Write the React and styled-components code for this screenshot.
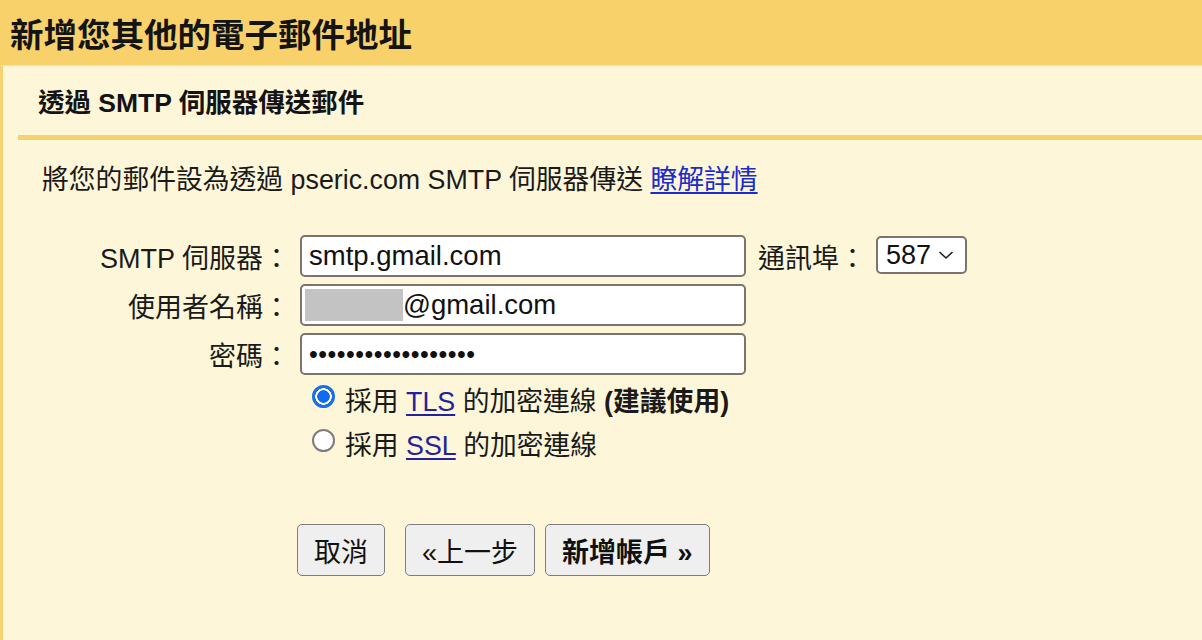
import React from "react";
import styled, { createGlobalStyle } from "styled-components";

const GlobalStyle = createGlobalStyle`
  html, body {
    margin: 0;
    padding: 0;
    background: #fdf6d8;
  }
  body {
    font-family: "Liberation Sans", "Noto Sans CJK TC", sans-serif;
    color: #111;
  }
`;

const Page = styled.div`
  width: 1202px;
  height: 640px;
  display: flex;
  flex-direction: column;
  overflow: hidden;
  background: #fdf6d8;
`;

const Header = styled.div`
  height: 66px;
  flex-shrink: 0;
  display: flex;
  align-items: center;
  padding-left: 10px;
  background: #f9d16b;
  border-bottom: 1px solid #fbe3a0;
  box-sizing: border-box;

  h1 {
    margin: 0;
    font-size: 33.5px;
    font-weight: 700;
    color: #141414;
    letter-spacing: 0;
  }
`;

const Body = styled.div`
  flex: 1;
  border-left: 3px solid #f6d370;
  background: #fdf6d8;
`;

const SubHeader = styled.div`
  margin-left: 15px;
  height: 69px;
  display: flex;
  align-items: center;
  padding-left: 20px;
  border-bottom: 5px solid #f6d16f;

  h2 {
    margin: 0;
    font-size: 26.5px;
    font-weight: 700;
    color: #141414;
  }
`;

const Description = styled.p`
  margin: 20px 0 0 39px;
  font-size: 26.8px;
  line-height: 40px;
  color: #1a1a1a;
`;

const Link = styled.a`
  color: ${props => props.$dark ? "#22229a" : "#1a2ccc"};
  text-decoration: underline;
  text-underline-offset: 3px;
  cursor: pointer;
`;

const Form = styled.div`
  margin: 35px 0 0 39px;
  display: grid;
  grid-template-columns: 248px 446px max-content max-content;
  justify-content: start;
  column-gap: 10px;
  row-gap: 7px;
  align-items: start;
  font-size: 27px;
`;

const Label = styled.label`
  height: 42px;
  display: flex;
  align-items: center;
  justify-content: flex-end;
  color: #1a1a1a;
  white-space: nowrap;
`;

const PortLabel = styled(Label)`
  margin-left: 2px;
  justify-content: flex-start;
`;

const FieldBox = styled.div`
  box-sizing: border-box;
  height: 42px;
  display: flex;
  align-items: center;
  padding: 0 7px;
  background: #fff;
  border: 2px solid #7a756c;
  border-radius: 5px;
  font-size: 27.5px;
  color: #111;
  overflow: hidden;
  white-space: nowrap;
`;

const TextInput = styled.input`
  box-sizing: border-box;
  width: 100%;
  height: 42px;
  padding: 0 7px;
  margin: 0;
  background: #fff;
  border: 2px solid #7a756c;
  border-radius: 5px;
  font-family: "Liberation Sans", "Noto Sans CJK TC", sans-serif;
  font-size: 27.5px;
  color: #111;
  outline: none;
`;

const PasswordInput = styled(TextInput)`
  font-size: 25px;
  letter-spacing: 0.5px;
`;

const Redacted = styled.span`
  display: inline-block;
  width: 98px;
  height: 32px;
  margin-left: -4px;
  background: #c3c3c3;
`;

const SelectBox = styled.div`
  box-sizing: border-box;
  margin-top: 1px;
  width: 91px;
  height: 38px;
  display: flex;
  align-items: center;
  gap: 7px;
  padding: 0 8px;
  background: #fff;
  border: 2px solid #7a756c;
  border-radius: 5px;
  font-size: 27px;
  color: #111;

  svg {
    flex-shrink: 0;
  }
`;

const Span = styled.div`
  grid-column: ${props => props.$col};
`;

const RadioGroup = styled.div`
  grid-column: 2 / 5;
  margin-top: -5px;
  padding-left: 12px;
  display: flex;
  flex-direction: column;
`;

const RadioRow = styled.label`
  height: 44px;
  display: flex;
  align-items: center;
  gap: 10px;
  font-size: 26.8px;
  color: #1a1a1a;
  white-space: nowrap;

  b {
    font-weight: 700;
  }
`;

const Radio = styled.input.attrs({ type: "radio" })`
  appearance: none;
  box-sizing: border-box;
  width: 23px;
  height: 23px;
  margin: -6px 0 0 0;
  border-radius: 50%;
  border: 2px solid #7c7c7c;
  background: #fff;

  &:checked {
    border: 2px solid #1b6fe8;
    background: radial-gradient(circle, #0d6cf2 0 6px, #fff 6.5px 8px, #1b6fe8 8.5px);
  }
`;

const Buttons = styled.div`
  grid-column: 2 / 5;
  margin: 52px 0 0 -3px;
  display: flex;
  gap: 10px;
`;

const Button = styled.button`
  box-sizing: border-box;
  height: 52px;
  padding: 0 16px;
  margin-right: ${props => props.$gap || 0}px;
  background: #efefef;
  border: 1.5px solid #7d7d7d;
  border-radius: 5px;
  font-family: "Liberation Sans", "Noto Sans CJK TC", sans-serif;
  font-size: 27px;
  font-weight: ${props => props.$bold ? 700 : 400};
  color: #111;
  cursor: pointer;
`;

const Chevron = () => (
  <svg width="16" height="10" viewBox="0 0 16 10">
    <path d="M1.5 2 L8 8 L14.5 2" fill="none" stroke="#222" strokeWidth="1.6" />
  </svg>
);

export default function App() {
  return (
    <>
      <GlobalStyle />
      <Page>
        <Header>
          <h1>新增您其他的電子郵件地址</h1>
        </Header>
        <Body>
          <SubHeader>
            <h2>透過 SMTP 伺服器傳送郵件</h2>
          </SubHeader>
          <Description>
            將您的郵件設為透過 pseric.com SMTP 伺服器傳送 <Link>瞭解詳情</Link>
          </Description>
          <Form>
            <Label>SMTP 伺服器：</Label>
            <TextInput readOnly value="smtp.gmail.com" />
            <PortLabel>通訊埠：</PortLabel>
            <SelectBox>
              587
              <Chevron />
            </SelectBox>

            <Label>使用者名稱：</Label>
            <FieldBox>
              <Redacted />
              @gmail.com
            </FieldBox>
            <Span $col="3 / 5" />

            <Label>密碼：</Label>
            <PasswordInput readOnly type="password" value="passwordpassword12" />
            <Span $col="3 / 5" />

            <RadioGroup>
              <RadioRow>
                <Radio name="enc" defaultChecked />
                <span>
                  採用 <Link $dark>TLS</Link> 的加密連線 <b>(建議使用)</b>
                </span>
              </RadioRow>
              <RadioRow>
                <Radio name="enc" />
                <span>
                  採用 <Link $dark>SSL</Link> 的加密連線
                </span>
              </RadioRow>
            </RadioGroup>

            <Buttons>
              <Button $gap={10}>取消</Button>
              <Button>«上一步</Button>
              <Button $bold>新增帳戶 »</Button>
            </Buttons>
          </Form>
        </Body>
      </Page>
    </>
  );
}
